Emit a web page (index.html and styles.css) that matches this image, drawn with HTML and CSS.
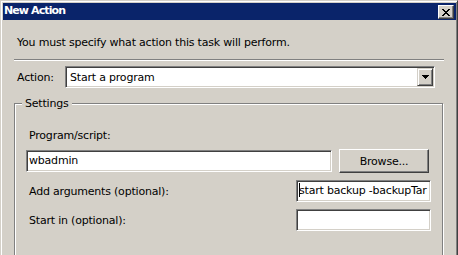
FILE: index.html
```html
<!DOCTYPE html>
<html lang="en">
<head>
  <meta charset="UTF-8">
  <title>New Action</title>
  <link rel="stylesheet" href="styles.css">
</head>
<body>

  <div class="window">
    <div class="titlebar">
      <span class="title">New Action</span>
      <span class="close-btn">
        <svg width="8" height="7" viewBox="0 0 8 7" shape-rendering="crispEdges">
          <rect x="0" y="0" width="2" height="1"/><rect x="6" y="0" width="2" height="1"/>
          <rect x="1" y="1" width="2" height="1"/><rect x="5" y="1" width="2" height="1"/>
          <rect x="2" y="2" width="4" height="1"/>
          <rect x="3" y="3" width="2" height="1"/>
          <rect x="2" y="4" width="4" height="1"/>
          <rect x="1" y="5" width="2" height="1"/><rect x="5" y="5" width="2" height="1"/>
          <rect x="0" y="6" width="2" height="1"/><rect x="6" y="6" width="2" height="1"/>
        </svg>
      </span>
    </div>

    <div class="content">
      <p class="intro">You must specify what action this task will perform.</p>
      <div class="separator"></div>

      <div class="action-row">
        <span class="action-label">Action:</span>
        <div class="combo">
          <span class="combo-text">Start a program</span>
          <span class="drop-btn">
            <svg width="7" height="4" viewBox="0 0 7 4" shape-rendering="crispEdges">
              <rect x="0" y="0" width="7" height="1"/>
              <rect x="1" y="1" width="5" height="1"/>
              <rect x="2" y="2" width="3" height="1"/>
              <rect x="3" y="3" width="1" height="1"/>
            </svg>
          </span>
        </div>
      </div>

      <fieldset class="settings">
        <legend>Settings</legend>
        <div class="field-label">Program/script:</div>
        <div class="program-row">
          <div class="textbox program">wbadmin</div>
          <div class="button">Browse...</div>
        </div>
        <div class="arg-row">
          <span class="arg-label">Add arguments (optional):</span>
          <div class="textbox small"><span class="caret"></span>start backup -backupTar</div>
        </div>
        <div class="arg-row">
          <span class="arg-label">Start in (optional):</span>
          <div class="textbox small"></div>
        </div>
      </fieldset>
    </div>
  </div>

</body>
</html>
```

FILE: styles.css
```css
body {
  margin: 0;
  padding: 0;
  width: 458px;
  height: 255px;
  overflow: hidden;
  background: #d4d0c8;
  font-family: 'DejaVu Sans', sans-serif;
  font-size: 11px;
  letter-spacing: -0.2px;
  color: #000;
}

.window {
  box-sizing: border-box;
  width: 458px;
  height: 255px;
  overflow: hidden;
  padding: 1px;
  background: #d4d0c8;
  border-style: solid;
  border-width: 1px 1px 0 1px;
  border-color: #d4d0c8 #404040 #404040 #d4d0c8;
  box-shadow: inset 1px 1px #fff, inset -1px 0 #808080;
}

.titlebar {
  height: 17px;
  margin: 1px 0 0 1px;
  background: #0a246a;
  display: flex;
  align-items: flex-start;
  justify-content: space-between;
}

.title {
  color: #fff;
  font-weight: bold;
  letter-spacing: -0.9px;
  line-height: 16px;
  padding-left: 1px;
}

.close-btn {
  box-sizing: border-box;
  width: 16px;
  height: 14px;
  margin: 2px 2px 0 0;
  background: #d4d0c8;
  border-style: solid;
  border-width: 1px;
  border-color: #fff #404040 #404040 #fff;
  box-shadow: inset -1px -1px #808080;
  display: flex;
  align-items: center;
  justify-content: center;
}

.content {
  padding: 0 12px 0 12px;
}

.intro {
  margin: 16px 0 0 3px;
  line-height: 13px;
}

.separator {
  margin-top: 10px;
  border-top: 1px solid #808080;
  border-bottom: 1px solid #fff;
}

.action-row {
  display: flex;
  align-items: center;
  margin-top: 5px;
}

.action-label {
  width: 48px;
  margin-left: 3px;
}

.combo {
  box-sizing: border-box;
  flex: 1;
  height: 22px;
  margin-right: 9px;
  background: #fff;
  border-style: solid;
  border-width: 1px;
  border-color: #808080 #fff #fff #808080;
  box-shadow: inset 1px 1px #404040, inset -1px -1px #d4d0c8;
  display: flex;
  align-items: center;
  padding: 1px;
}

.combo-text {
  flex: 1;
  padding-left: 3px;
}

.drop-btn {
  box-sizing: border-box;
  width: 16px;
  height: 18px;
  background: #d4d0c8;
  border-style: solid;
  border-width: 1px;
  border-color: #d4d0c8 #404040 #404040 #d4d0c8;
  box-shadow: inset 1px 1px #fff, inset -1px -1px #808080;
  display: flex;
  align-items: center;
  justify-content: center;
}

.settings {
  margin: 9px 1px 0 0;
  padding: 16px 11px 40px 11px;
  min-width: 0;
  border: 1px solid #808080;
  box-shadow: inset 1px 1px #fff, 1px 1px #fff;
}

.settings legend {
  margin-left: -4px;
  padding: 0 3px;
  line-height: 13px;
  background: #d4d0c8;
}

.field-label {
  margin-left: 3px;
  line-height: 13px;
  margin-top: 3px;
}

.program-row {
  display: flex;
  align-items: center;
  gap: 7px;
  margin-top: 7px;
}

.textbox {
  box-sizing: border-box;
  height: 22px;
  padding: 0 3px;
  background: #fff;
  border-style: solid;
  border-width: 1px;
  border-color: #808080 #fff #fff #808080;
  box-shadow: inset 1px 1px #404040, inset -1px -1px #d4d0c8;
  line-height: 20px;
  white-space: nowrap;
  overflow: hidden;
}

.textbox.program {
  width: 306px;
  padding-left: 2px;
}

.textbox.small {
  width: 135px;
  padding-left: 2px;
}

.caret {
  display: inline-block;
  width: 1px;
  height: 14px;
  margin-right: -1px;
  vertical-align: -3px;
  background: #000;
}

.button {
  box-sizing: border-box;
  width: 90px;
  height: 24px;
  background: #d4d0c8;
  border-style: solid;
  border-width: 1px;
  border-color: #fff #404040 #404040 #fff;
  box-shadow: inset -1px -1px #808080;
  display: flex;
  align-items: center;
  justify-content: center;
}

.arg-row {
  display: flex;
  align-items: center;
  justify-content: space-between;
  margin-top: 7px;
}

.arg-label {
  margin-left: 3px;
}
```
